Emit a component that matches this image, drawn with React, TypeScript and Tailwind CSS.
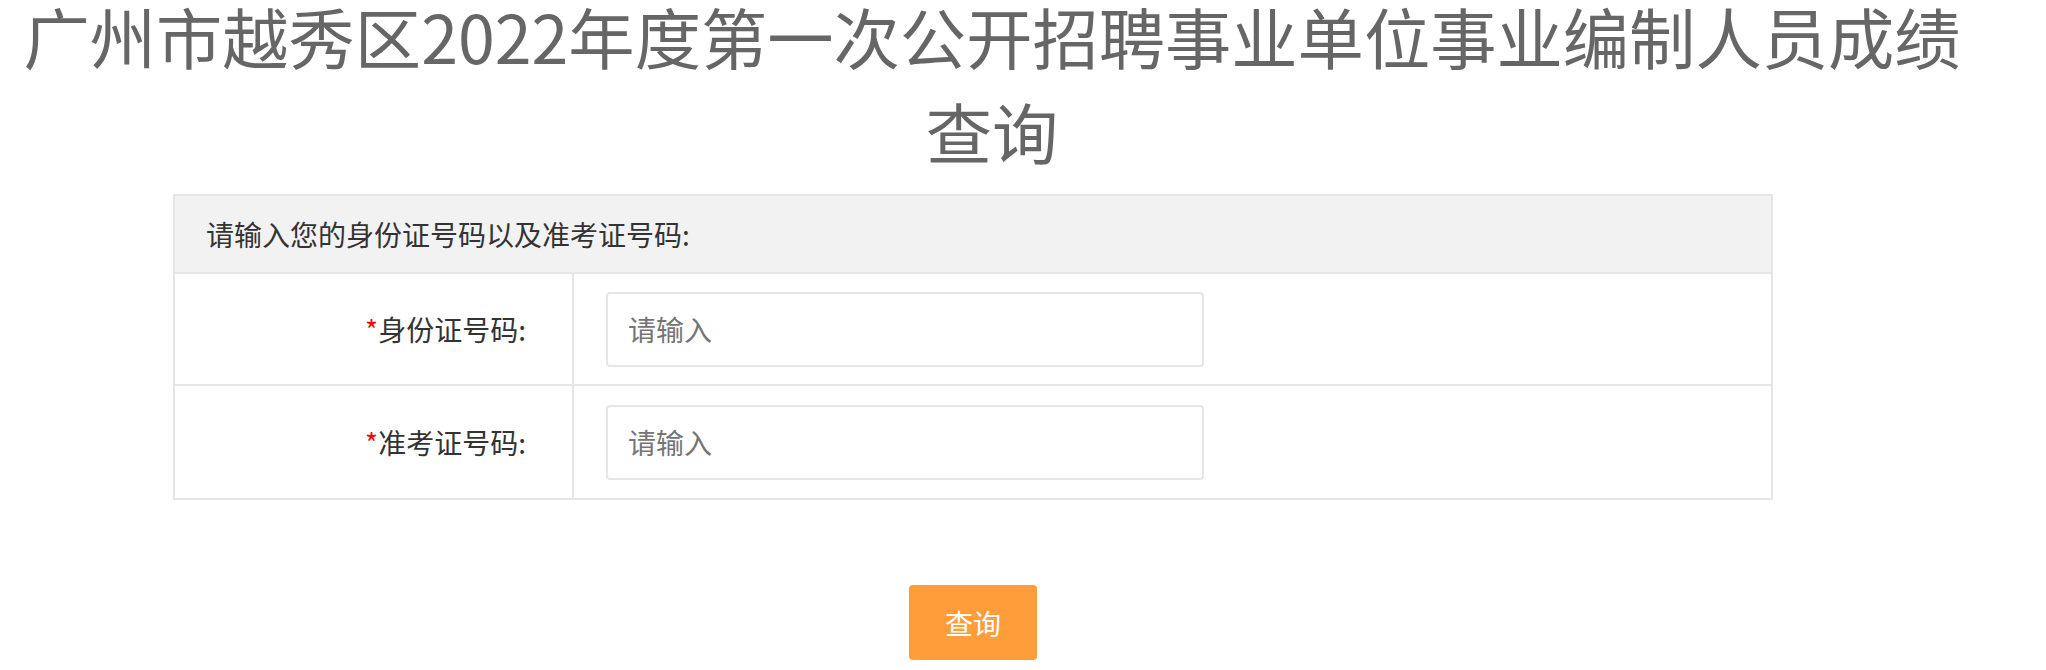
import React from 'react';

const font = { fontFamily: '"Noto Sans CJK SC", "Microsoft YaHei", sans-serif' };

// --- 表单行 ---
const FieldRow = ({ label, last }: { label: string; last?: boolean }) => (
    <div className={`grid grid-cols-[399px_1fr] h-[112px] ${last ? '' : 'border-b-2 border-[#e6e6e6]'}`}>
        <div className="flex items-center justify-end pr-[46px] border-r-2 border-[#e6e6e6] text-[28px] text-[#333]">
            <span className="text-[#f00]">*</span>
            {label}:
        </div>
        <div className="flex items-center pl-[32px]">
            <input
                type="text"
                placeholder="请输入"
                className="w-[598px] h-[75px] border-2 border-[#e6e6e6] rounded-[4px] pl-[20px] text-[28px] text-[#333] placeholder:text-[#757575] outline-none"
            />
        </div>
    </div>
);

export default function App() {
    return (
        <main className="bg-white w-[2046px] h-[670px] overflow-hidden" style={font}>
            <h1 className="w-[1984px] text-center text-[66.3px] text-[#666] font-normal whitespace-nowrap">
                <span className="block leading-[70px]">广州市越秀区2022年度第一次公开招聘事业单位事业编制人员成绩</span>
                <span className="block leading-[90px] mt-[15px]">查询</span>
            </h1>

            <div className="ml-[173px] w-[1600px] mt-[19px]">
                <div className="border-2 border-[#e6e6e6]">
                    <div className="h-[78px] bg-[#f2f2f2] border-b-2 border-[#e6e6e6] flex items-center pl-[31px] text-[28px] text-[#333]">
                        请输入您的身份证号码以及准考证号码:
                    </div>
                    <FieldRow label="身份证号码" />
                    <FieldRow label="准考证号码" last />
                </div>

                <div className="flex justify-center mt-[85px]">
                    <button className="w-[128px] h-[75px] rounded-[4px] bg-[#ff9d3a] text-white text-[28px]">
                        查询
                    </button>
                </div>
            </div>
        </main>
    );
}
